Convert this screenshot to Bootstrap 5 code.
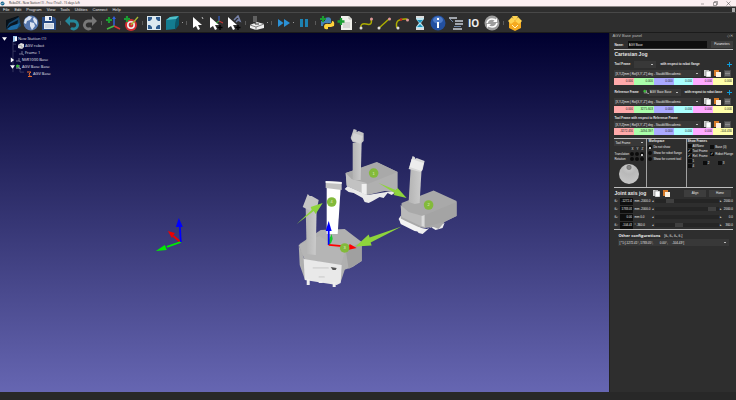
<!DOCTYPE html>
<html lang="en">
<head>
<meta charset="utf-8">
<meta name="viewport" content="width=device-width, initial-scale=1">
<title>RoboDK - New Station (1)</title>
<link href="https://cdn.jsdelivr.net/npm/bootstrap@5.3.0/dist/css/bootstrap.min.css" rel="stylesheet">
<style>
body{font:4px/6px "Liberation Sans",Arial,sans-serif;background:#2e2e2e;color:#e8e8e8}
button,input,select{font:inherit;color:inherit;border:0;padding:0;margin:0;border-radius:0;min-width:0}
button{background:none;line-height:1}
.titlebar{height:7px;background:#fbeff1;color:#222;font:3px/6px "Open Sans",sans-serif;border-bottom:1px solid #8e8888}
.titlebar svg{width:5px;height:5px;display:block}
.titlebar .win{gap:8px;margin-right:5px}
.menubar{height:6px;border-bottom:1px solid #484848;gap:5px;padding-left:3px}
.menubar button{line-height:5px}
.toolbar-main{height:20px;border-bottom:1px solid #1b1b1b;padding-left:4px}
.tool{width:18px;height:18px;flex:none;display:flex;align-items:center;justify-content:center}
.tool svg{width:16px;height:16px}
.sep{width:5px;flex:none;display:flex;justify-content:center}
.sep::before{content:"";width:1px;height:4px;background:#5a5a5a}
.more{width:3px;flex:none;display:flex;justify-content:center}
.more::before{content:"";width:1px;height:1px;background:#999}
.view3d{background:linear-gradient(#00002f,#6666b2);min-width:0}
.view3d>svg{width:100%;height:100%;display:block}
.tree{position:absolute;left:2px;top:2px;font:4px/7px "Open Sans",sans-serif;color:#e6e6f0}
.tree svg{width:7px;height:6px;flex:none}
.tree .tw{width:5px}
.tree li{height:7px}
.dock{width:17.2%;padding:0 3px 0 4px;font-size:3px;line-height:4px;border-left:1px solid #222}
.dock>*{flex:none}
.dock-title{height:8px;line-height:5px;color:#bbb;font-size:4px;margin-left:-2px}
.rule{height:1px;background:#bdbdbd}
.h5px{font:bold 5px/8px "Liberation Sans",sans-serif;margin:0}
.h4px{font:bold 4px/6px "Open Sans",sans-serif;margin:0}
.b{font-weight:bold}
.t1{margin-top:1px}.t2{margin-top:2px}.t3{margin-top:3px}
.line8{height:8px}
.field{background:#0e0e0e;height:7px;padding:0 1px}
.pbtn{background:#3d3d3d;height:7px;text-align:center;width:22px;flex:none}
.sel{appearance:none;height:7px;background:#383838 linear-gradient(#bbb,#bbb) no-repeat right 3px center/2px 1px;padding:0 1px;line-height:6px}
.w-tf{width:22px}.w-rf{width:32px}
.posebar{gap:3px;padding-right:2px}
.tiny{width:7px;height:7px;flex:none}
.tiny svg{width:7px;height:7px;display:block}
.cells input{width:0;flex:1 1 0;height:7px;text-align:right;color:#222;line-height:7px;padding-right:1px}
.cells input:nth-child(1){background:#ffaaaa}.cells input:nth-child(2){background:#aaffaa}
.cells input:nth-child(3){background:#aaaaff}.cells input:nth-child(4){background:#aaffff}
.cells input:nth-child(5){background:#ffaaff}.cells input:nth-child(6){background:#ffffaa}
.opts{height:48px}
.opts>*{min-width:0}
.opts .o1{width:27%}.opts .o2{width:33%}.opts .o3{width:40%}
.opts>*+*{border-left:1px solid #a2a2a2;padding-left:1px}
.axes{display:grid;grid-template-columns:1fr 4px 4px 4px;gap:1px;padding:1px 2px 0 0;line-height:4px;text-align:center}
.axes span:first-child,.axes .nm{text-align:left}
.tick{appearance:none;width:4px;height:4px;background:#0c0c0c;flex:none;display:block;line-height:4px}
.tick[type=radio]{border-radius:50%}
.tick:checked::before{content:"✓";display:block;font:bold 4px/4px "DejaVu Sans",sans-serif;color:#fff}
.tick[type=radio]:checked::before{content:"";width:2px;height:2px;background:#fff;border-radius:50%;margin:1px;position:relative;top:1px}
.opt{display:flex;align-items:center;gap:1px;white-space:nowrap;height:5px}
.knob{width:20px;height:20px;border-radius:50%;background:radial-gradient(circle at 50% 17%,#888 0 1px,#777 2px,#c4c4c4 3px,#b9b9b9 7px,#cacaca);margin:3px auto 0 5px;display:block}
.jrow{height:8px;display:flex;align-items:center;gap:1px}
.jrow .field{width:13px;text-align:right}
.jrow label{width:5px}
.lo{width:17px;white-space:nowrap}.hi{width:10px;text-align:right}
.slide{appearance:none;flex:1;width:0;height:4px;background:#252525}
.slide::-webkit-slider-thumb{appearance:none;width:8px;height:4px;background:#404040}
.slide.full::-webkit-slider-thumb{width:2px;background:#252525}
.status{height:8px;background:#282828}
</style>
<script src="https://cdn.jsdelivr.net/npm/bootstrap@5.3.0/dist/js/bootstrap.bundle.min.js"></script>
</head>
<body class="d-flex flex-column vh-100 overflow-hidden">
<header>
<div class="titlebar d-flex align-items-center">
<svg class="mx-0 ms-0" viewBox="0 0 10 10"><circle cx="5" cy="5" r="4" fill="#17658e"/><path d="M2 6 9 3" stroke="#fff"/></svg>
<span class="ps-1">RoboDK - New Station (1) - Free (Trial) - 15 days left</span>
<div class="win ms-auto d-flex"><button aria-label="Minimize"><svg viewBox="0 0 10 10"><path d="M2 6h6" stroke="#555"/></svg></button><button aria-label="Restore"><svg viewBox="0 0 10 10"><path d="M1 3h6v6H1zM3 3V1h6v6H7" fill="none" stroke="#444"/></svg></button><button aria-label="Close"><svg viewBox="0 0 10 10"><path d="m1 1 8 8M9 1 1 9" stroke="#444"/></svg></button></div>
</div>
<nav class="menubar d-flex"><button>File</button><button>Edit</button><button>Program</button><button>View</button><button>Tools</button><button>Utilities</button><button>Connect</button><button>Help</button><button class="ms-auto me-0" aria-label="Restore view"><svg width="4" height="4" viewBox="0 0 4 4"><path d="M0 0h3v4H0z" fill="#aaa"/></svg></button></nav>
<div class="toolbar-main d-flex align-items-center">
<button class="tool" aria-label="Open"><svg viewBox="0 0 16 16"><path d="M1 5 13 1v10L5 14H1z" fill="#071018"/><path d="m4 5 10-4-1 9-8 4-4-2z" fill="#09131d"/><path d="m1 14 3-6 10-6 2 9-4 3-7 1z" fill="#16486f"/><path d="m1 14 4-5 8-4-1 7-7 2z" fill="#0a1520"/><path d="m2 14 4-3 9-3-3 6-7 1z" fill="#1c6ba6"/></svg></button>
<button class="tool" aria-label="Online library"><svg viewBox="0 0 16 16"><circle cx="8" cy="8" r="7.500" fill="#5576ac"/><path d="m2 4 4-3 3 1-2 3-3 1-1 3-2-1zM7 7l4 1 1 3-3 4-2-4zM11 2l3 3v5l-3-3-1-3z" fill="#dbe3f1"/></svg></button>
<button class="tool" aria-label="Save"><svg viewBox="0 0 16 16"><path d="M1 2h12l2 2v11H1z" fill="#294b83"/><path d="M4 1h7v5H4zM3 8h10v6H3z" fill="#e8edf2"/><path d="M8 2h2v3H8z" fill="#294b83"/><path d="M4 10h8M4 12h8" stroke="#91a1b8" stroke-width=".6"/></svg></button>
<span class="sep"></span>
<button class="tool" aria-label="Undo"><svg viewBox="0 0 16 16"><path d="M4 6h6a4 4 0 1 1-3 7" fill="none" stroke="#25879a" stroke-width="2.800"/><path d="M1 6 6 1v10z" fill="#25879a"/></svg></button>
<button class="tool" aria-label="Redo"><svg viewBox="0 0 16 16"><path d="M12 6H6a4 4 0 1 0 3 7" fill="none" stroke="#777" stroke-width="2.800"/><path d="m15 6-5-5v10z" fill="#777"/></svg></button>
<span class="sep"></span>
<button class="tool" aria-label="Add reference frame"><svg viewBox="0 0 16 16"><path d="M9 11V3" stroke="#3260db" stroke-width="1.500"/><path d="m9 1-2 3h4z" fill="#3260db"/><path d="m9 11 6 3" stroke="#d33" stroke-width="1.600"/><path d="m9 11-7 3" stroke="#4b4" stroke-width="1.500"/><path d="M4 2v6M1 5h6" stroke="#1b9d32" stroke-width="2.200"/></svg></button>
<button class="tool" aria-label="Add target"><svg viewBox="0 0 16 16"><circle cx="8" cy="10" r="6" fill="#d42d31"/><circle cx="8" cy="10" r="4" fill="#eee"/><circle cx="8" cy="10" r="2.400" fill="#d42d31"/><path d="m8 10 7-8" stroke="#a8b936" stroke-width="1.400"/><path d="M4 1v6M1 4h6" stroke="#1b9d32" stroke-width="2.200"/></svg></button>
<span class="sep"></span>
<button class="tool" aria-label="Fit all"><svg viewBox="0 0 16 16"><path d="M1 1h14v14H1z" fill="#dce8ef"/><path d="M2 2h4v2L4 6H2zM14 2v4h-2l-2-2V2zM2 14v-4h2l2 2v2zM14 14h-4v-2l2-2h2z" fill="#2d5a8c"/></svg></button>
<button class="tool" aria-label="Isometric view"><svg viewBox="0 0 16 16"><path d="m2 5 4-3 9-1-3 4-1 9-9 1z" fill="#137c91"/><path d="m2 5 10-1 3-3-9 1z" fill="#4fc0ca"/><path d="m12 5 3-4v9l-4 5z" fill="#08596e"/></svg></button>
<span class="more"></span><span class="sep"></span>
<button class="tool" aria-label="Select"><svg viewBox="0 0 16 16"><path d="M3 2v11l3-2 2 4 2-1-2-4h4z" fill="#fff"/><path d="m12 2 1 2" stroke="#bbb"/></svg></button>
<button class="tool" aria-label="Move frame"><svg viewBox="0 0 16 16"><path d="M2 2v11l3-2 2 4 2-1-2-4h4z" fill="#fff"/><path d="M11 6V1" stroke="#36d"/><path d="m11 6 4 2" stroke="#d33"/><path d="m11 6-3 2" stroke="#4b4"/><path d="M12 10v5m-2.500-2.500h5" stroke="#000" stroke-width="1.400"/></svg></button>
<button class="tool" aria-label="Move tool"><svg viewBox="0 0 16 16"><path d="M2 2v11l3-2 2 4 2-1-2-4h4z" fill="#fff"/><path d="m8 5 4-4 2 5-2-1-2 2" fill="none" stroke="#7782a8" stroke-width="1.500"/><path d="M12 10v5m-2.500-2.500h5" stroke="#000" stroke-width="1.400"/></svg></button>
<span class="sep"></span>
<button class="tool" aria-label="Check collisions"><svg viewBox="0 0 16 16"><path d="m1 10 7-3 7 2v4l-8 2-6-2z" fill="#eee"/><path d="m1 10 6 2 8-3M7 12v3" fill="none" stroke="#555" stroke-width=".7"/><path d="M4 1h4v6H4z" fill="#606060"/><path d="M6 7v2h4" fill="none" stroke="#333"/></svg></button>
<span class="more"></span><span class="sep"></span>
<button class="tool" aria-label="Fast simulation"><svg viewBox="0 0 16 16"><path d="m3 4 5.500 4L3 12zm6 0 6 4-6 4z" fill="#2b91d6"/></svg></button>
<span class="more"></span>
<button class="tool" aria-label="Pause"><svg viewBox="0 0 16 16"><path d="M4 4h3v8H4zm5 0h3v8H9z" fill="#1d82b2"/></svg></button>
<span class="sep"></span>
<button class="tool" aria-label="Add Python program"><svg viewBox="0 0 16 16"><path d="M6 3q5-2 6 1v4H7q-3 0-3 3H2V6h4z" fill="#4583b6"/><path d="M13 6q3 0 2 5l-3 1H9v2q-4 1-4-2 0-4 5-3 3 0 3-3z" fill="#ffd43b"/><path d="M4 1v6M1 4h6" stroke="#1b9d32" stroke-width="2.200"/></svg></button>
<button class="tool" aria-label="Add program"><svg viewBox="0 0 16 16"><path d="M4 1h8l3 3v11H4z" fill="#f1f1ec"/><path d="M12 1v3h3M6 8h7M6 10h7M6 12h7" fill="none" stroke="#aaa" stroke-width=".7"/><path d="M4 3v7M.5 6.500h7" stroke="#1b9d32" stroke-width="2.300"/></svg></button>
<span class="more"></span>
<button class="tool" aria-label="Joint move"><svg viewBox="0 0 16 16"><path d="M3 13q-1-5 5-4 7 2 5-5" fill="none" stroke="#acad00" stroke-width="1.500"/><circle cx="3" cy="13" r="1.500" fill="#ddd"/><circle cx="13.500" cy="4" r="1.500" fill="#d99"/></svg></button>
<button class="tool" aria-label="Linear move"><svg viewBox="0 0 16 16"><path d="m3 13 10-9" stroke="#acad00" stroke-width="1.500"/><circle cx="3" cy="13" r="1.500" fill="#ddd"/><circle cx="13.500" cy="4" r="1.500" fill="#d99"/></svg></button>
<button class="tool" aria-label="Circular move"><svg viewBox="0 0 16 16"><path d="M3 13Q0 3 13 4" fill="none" stroke="#acad00" stroke-width="1.500"/><circle cx="4" cy="13" r="1.500" fill="#ddd"/><circle cx="7" cy="4.500" r="1.300" fill="#c22"/><circle cx="13.500" cy="5" r="1.500" fill="#d99"/></svg></button>
<button class="tool" aria-label="Pause instruction"><svg viewBox="0 0 16 16"><path d="M4 2h8v2L9 8l3 4v2H4v-2l3-4-3-4z" fill="#bce6f2"/><path d="M4 2h8M4 14h8" stroke="#ddd" stroke-width="2"/><path d="m5 5 3 3 3-3zm0 7 3-3 3 3z" fill="#1995bf"/></svg></button>
<button class="tool" aria-label="Show message"><svg viewBox="0 0 16 16"><circle cx="8" cy="8" r="7.500" fill="#2350a0"/><ellipse cx="8" cy="5" rx="5" ry="3.500" fill="#4d7bc8"/><path d="M7 7h2v6H7zM7 3h2v2H7z" fill="#fff"/></svg></button>
<button class="tool" aria-label="Program call"><svg viewBox="0 0 16 16"><path d="M1 3h8M7 6h8M7 9h8M5 14h9" stroke="#c8ced8" stroke-width="1.300"/><path d="M6 11.500h7M2 4l3 3" stroke="#7188a8"/></svg></button>
<button class="tool" aria-label="Set IO"><svg viewBox="0 0 16 16"><text x="2" y="12" font-family="Open Sans" font-weight="bold" font-size="10" fill="#eee">IO</text></svg></button>
<button class="tool" aria-label="Simulation event"><svg viewBox="0 0 16 16"><circle cx="8" cy="8" r="7.500" fill="#9d9d9d"/><path d="M3 8q1-4 5-4 3 0 4 2M13 8q-1 4-5 4-3 0-4-2" fill="none" stroke="#fff" stroke-width="1.600"/><path d="m13 3v4H9zM3 13V9h4z" fill="#fff"/></svg></button>
<span class="sep"></span>
<button class="tool" aria-label="Export"><svg viewBox="0 0 16 16"><path d="m2 7 6-2 6 2v6l-6 3-6-3z" fill="#f5aa20"/><path d="m1 6 4-4 3 4-4 3zm14 0-4-4-3 4 4 3zM5 1h6l-2 4H7z" fill="#ffd351"/><path d="m5 10 3 3 3-3" fill="none" stroke="#fff1ba"/></svg></button>
</div>
</header>
<main class="d-flex flex-grow-1 overflow-hidden">
<section class="view3d flex-grow-1 position-relative">
<ul class="tree list-unstyled m-0">
<li class="d-flex align-items-center"><svg class="tw" viewBox="0 0 6 6"><path d="M0 1h6L3 5z" fill="#fff"/></svg><svg class="ms-1" viewBox="0 0 7 6"><path d="M2 0h4v5l-4 1z" fill="#9cc7ec"/><path d="M4 1h2v4H4z" fill="#fff"/></svg>New Station (1)</li>
<li class="d-flex align-items-center ms-3"><svg viewBox="0 0 7 6"><path d="m0 2 3-2 3 1v3L4 6 0 5z" fill="#ddd"/><path d="m0 2 4 1v3" fill="none" stroke="#888" stroke-width=".6"/></svg>AGV robot</li>
<li class="d-flex align-items-center ms-3"><svg viewBox="0 0 7 6"><path d="M4 1v3H1m3 0 2 1" fill="none" stroke="#999ab0" stroke-width=".7"/></svg>Frame 1</li>
<li class="d-flex align-items-center"><svg class="tw ms-2" viewBox="0 0 6 6"><path d="M1 0v6l4-3z" fill="#fff"/></svg><svg class="ms-0" viewBox="-1 0 7 6"><path d="M3 1v3H0m3 0 2 1" fill="none" stroke="#999ab0" stroke-width=".7"/></svg><span class="ps-0 t-pad">MiR1000 Base</span></li>
<li class="d-flex align-items-center"><svg class="tw ms-2" viewBox="0 0 6 6"><path d="M0 1h6L3 5z" fill="#fff"/></svg><svg viewBox="-1 0 7 6"><path d="M3 1v3H0m3 0 2 1" fill="none" stroke="#ddd" stroke-width=".7"/><circle cx="1.500" cy="2" r="1.500" fill="#39b838"/></svg>AGV Base Base</li>
<li class="d-flex align-items-center ms-4"><svg viewBox="0 0 7 6"><path d="M1 1h4L3 3l1 2M2 5.500h4" fill="none" stroke="#e46b2e"/></svg>AGV Base</li>
</ul>
<svg viewBox="0 33 610 359" role="img" aria-label="Station view with AGV route">
<defs>
<linearGradient id="mast"><stop offset="0" stop-color="#b4b4b4"/><stop offset="1" stop-color="#cccccc"/></linearGradient>
</defs>
<path d="M13 41v31M13 44h3M13 51h3M20 68v4h4" fill="none" stroke="#49496e" stroke-width=".7"/>
<path d="m345 189 3-3 20 9 25-4 2 2-3 2-4-2-4 5-4-1-7 4-4 2-4-1-2-4-9-5-5-1z" fill="#eaeaea"/><path d="M346 173 378 162.500 398 172v17l-4 3-9-1-17 4-6-3-15-7z" fill="#b0b0b0"/><path d="M346 173 377 162 398 172 368 184 352 181z" fill="#a9a9a9"/><path d="m346 173 6 6 15 4v12l-20-9z" fill="#c2c2c2"/><path d="M362 184h5v11l-5-2z" fill="#efefef"/><path d="m353 143 9-1-1 38h-8z" fill="url(#mast)"/><path d="m354 129 3 1v2l2-1 5 2v8l-3 3-8-2-2-4z" fill="#c4c4c4"/><path d="m354 133 9 3-2 8-9-4z" fill="#d4d4d4"/>
<path d="m401 216 21 12 5 1 18-6-2 5-7 2-5-3-8 7-4-1-2-3-16-7-2-4z" fill="#efefef"/>
<path d="M402 203 434 190.500 457 201v15l-12 6-6 7-5-2-9 1-9-1-15-7z" fill="#a9a9a9"/><path d="m401 205 8 7 14 4v11l-21-10z" fill="#bababa"/><path d="m423 216 34-14v14l-13 6-19 5z" fill="#a4a4a4"/><path d="m422 216 3-1v12l-3-1z" fill="#dadada"/><path d="m400 218 6 3 15 7v4l-6-1-14-7z" fill="#f3f3f3"/><path d="M411 169h11l-2 34-5 1-6-2z" fill="url(#mast)"/><path d="m413 156 2 1 1 2 1-1 8 3-2 9-2 2-12-3z" fill="#d9d9d9"/><path d="m412 159 12 4-2 8-12-4z" fill="#ededed"/>
<path d="m300 244 21-14 24-1 17 13v19l-9 6-9 3-43-15z" fill="#b0b0b0"/><path d="m346 250 16-8v19l-13 8z" fill="#a0a0a0"/>
<path d="m327 187 14 1-3 46h-11z" fill="#fff"/><path d="m326 181 16 1v8l-16-2z" fill="#c1c1c1"/><path d="m326 181 16 1v2l-16-1z" fill="#f6f6f6"/>
<path d="m299 245 21-9 25 17-3 12-37-5z" fill="#b5b5b5"/><path d="m299 245 6 15 36 5 5-14v16l-5 15-36-3-5-14z" fill="#b0b0b0"/><path d="m304 259 38 6-1 18-4 2-32-5z" fill="#e9e9e9"/><path d="M307 279h3v6h-3zM333 282h3v5h-3zM319 281h4v2h-4z" fill="#eee"/><path d="M313 268h16M319 277h6" stroke="#bcbcbc" stroke-width=".7"/><path d="m331 267 6 1-1 2h-3z" fill="#555"/>
<path d="m306 208 11-2-1 49-9-1z" fill="url(#mast)"/><path d="m308 194 2 2h2l7 4-2 10-4 2-10-5z" fill="#c5c5c5"/>
<g fill="#8ed43c"><path d="m297 224 15-14-1-3 12-4-7 11-2-3zM379 183l17 7 2-2 9 10-13-3 1-2zM402 226.500l-31 16 1 3-16 1 13-12 1 3z"/></g>
<path d="m329 245 2-8" stroke="#0e2" stroke-width="1.500"/><path d="m332 234 1 5-2 5-2-3z" fill="#18c92c"/><path d="M329 245v-15" stroke="#00f" stroke-width="1.800"/><path d="m329 221-3 10h6z" fill="#00f"/><path d="m329 245 22 2" stroke="#f00" stroke-width="1.800"/><path d="m350 244 7 4-9 2z" fill="#f00"/>
<path d="m180.500 242-7-6" stroke="#e00" stroke-width="2"/><path d="m168 231 7 2-3 5z" fill="#e00"/><path d="m181 242-14 5" stroke="#0e0" stroke-width="1.800"/><path d="m156 251 9-6 2 5z" fill="#0e0"/><path d="m181 242-1-16" stroke="#00f" stroke-width="1.800"/><path d="m179 218-3 9h7z" fill="#00f"/>
<g fill="#83ba3b"><circle cx="374" cy="173" r="4.800"/><circle cx="429" cy="205" r="4.800"/><circle cx="345" cy="248" r="4.800"/><circle cx="332" cy="202" r="4.800"/></g>
<g fill="#e3f0c9" font-family="Liberation Sans" font-size="4" text-anchor="middle"><text x="374" y="174.500">1</text><text x="429" y="206.500">2</text><text x="345" y="249.500">3</text><text x="332" y="203.500">4</text></g>
</svg>
</section>
<aside class="dock flex-shrink-0 d-flex flex-column">
<svg width="0" height="0" class="position-absolute"><defs>
<g id="copy"><path d="M0 0h5v6H0z" fill="#ccc"/><path d="M2 1h5v6H2z" fill="#fff" stroke="#666" stroke-width=".5"/></g>
<g id="paste"><path d="M0 0h5v6H0z" fill="#d77b28"/><path d="M2 2h5v5H2z" fill="#fbf0e0"/></g>
<g id="rows"><path d="M0 0h7v7H0z" fill="#4a4a4a"/><path d="M1 2h5M1 3.500h5M1 5h5" stroke="#aaa" stroke-width=".7"/></g>
<g id="plus"><path d="M3.500 1v5M1 3.500h5" stroke="#0c9ddd"/></g></defs></svg>
<div class="dock-title d-flex justify-content-between"><span>AGV Base panel</span><span>◇✕</span></div>
<div class="d-flex align-items-center"><label class="b" for="nm">Name:</label><input id="nm" class="field flex-grow-1 ms-1 me-1" value="AGV Base"><button class="pbtn">Parameters</button></div>
<div class="rule t1"></div>
<h2 class="h5px">Cartesian Jog</h2>
<div class="line8 t2 d-flex align-items-center"><label class="b" for="tf">Tool Frame</label><select id="tf" class="sel w-tf mx-1"><option>&nbsp;</option></select><span class="b">with respect to robot flange</span><button class="tiny ms-auto" aria-label="Add tool"><svg viewBox="0 0 7 7"><use href="#plus"/></svg></button></div>
<div class="d-flex posebar t2"><select class="sel flex-grow-1" aria-label="Tool pose format"><option>[X,Y,Z]mm | Rot[X,Y',Z''] deg - Staubli/Mecademic</option></select><button class="tiny" aria-label="Copy"><svg viewBox="0 0 7 7"><use href="#copy"/></svg></button><button class="tiny" aria-label="Paste"><svg viewBox="0 0 7 7"><use href="#paste"/></svg></button><button class="tiny" aria-label="More"><svg viewBox="0 0 7 7"><use href="#rows"/></svg></button></div>
<div class="cells d-flex t1"><input aria-label="X" value="0.000"><input aria-label="Y" value="0.000"><input aria-label="Z" value="0.000"><input aria-label="U" value="0.000"><input aria-label="V" value="0.000"><input aria-label="W" value="0.000"></div>
<div class="line8 t3 d-flex align-items-center"><label class="b" for="rf">Reference Frame</label><svg class="ms-1" width="6" height="6" viewBox="0 0 7 6"><path d="M4 1v3H1m3 0 3 1" fill="none" stroke="#ddd" stroke-width=".7"/><circle cx="2" cy="2" r="1.500" fill="#39b838"/></svg><select id="rf" class="sel w-rf me-1"><option>AGV Base Base</option></select><span class="b">with respect to robot base</span><button class="tiny ms-auto" aria-label="Add frame"><svg viewBox="0 0 7 7"><use href="#plus"/></svg></button></div>
<div class="d-flex posebar t2"><select class="sel flex-grow-1" aria-label="Reference pose format"><option>[X,Y,Z]mm | Rot[X,Y',Z''] deg - Staubli/Mecademic</option></select><button class="tiny" aria-label="Copy"><svg viewBox="0 0 7 7"><use href="#copy"/></svg></button><button class="tiny" aria-label="Paste"><svg viewBox="0 0 7 7"><use href="#paste"/></svg></button><button class="tiny" aria-label="More"><svg viewBox="0 0 7 7"><use href="#rows"/></svg></button></div>
<div class="cells d-flex t1"><input aria-label="X" value="0.000"><input aria-label="Y" value="3275.603"><input aria-label="Z" value="0.000"><input aria-label="U" value="0.000"><input aria-label="V" value="0.000"><input aria-label="W" value="0.000"></div>
<div class="b t3">Tool Frame with respect to Reference Frame</div>
<div class="d-flex posebar t1"><select class="sel flex-grow-1" aria-label="Position format"><option>[X,Y,Z]mm | Rot[X,Y',Z''] deg - Staubli/Mecademic</option></select><button class="tiny" aria-label="Copy"><svg viewBox="0 0 7 7"><use href="#copy"/></svg></button><button class="tiny" aria-label="Paste"><svg viewBox="0 0 7 7"><use href="#paste"/></svg></button><button class="tiny" aria-label="More"><svg viewBox="0 0 7 7"><use href="#rows"/></svg></button></div>
<div class="cells d-flex"><input aria-label="X" value="-3272.430"><input aria-label="Y" value="-1494.397"><input aria-label="Z" value="0.000"><input aria-label="U" value="0.000"><input aria-label="V" value="0.000"><input aria-label="W" value="-104.430"></div>
<div class="rule t3"></div>
<div class="opts d-flex">
<div class="o1"><select class="sel w-100" aria-label="Jog frame"><option>Tool Frame</option></select>
<div class="axes"><span></span><span>X</span><span>Y</span><span>Z</span>
<span class="nm">Translation</span><input class="tick" type="radio" name="ax" aria-label="Translate X"><input class="tick" type="radio" name="ax" aria-label="Translate Y"><input class="tick" type="radio" name="ax" aria-label="Translate Z" checked>
<span class="nm">Rotation</span><input class="tick" type="radio" name="ax" aria-label="Rotate X"><input class="tick" type="radio" name="ax" aria-label="Rotate Y"><input class="tick" type="radio" name="ax" aria-label="Rotate Z"></div>
<button class="knob" aria-label="Jog dial"></button></div>
<div class="o2"><div class="b">Workspace</div>
<label class="opt t1"><input class="tick" type="radio" name="ws" checked>Do not show</label>
<label class="opt t1"><input class="tick" type="radio" name="ws">Show for robot flange</label>
<label class="opt t1"><input class="tick" type="radio" name="ws">Show for current tool</label></div>
<div class="o3"><div class="b">Show Frames</div>
<div class="row g-0"><div class="col-6"><label class="opt"><input class="tick" type="checkbox">All/None</label><label class="opt"><input class="tick" type="checkbox" checked>Tool Frame</label><label class="opt"><input class="tick" type="checkbox" checked>Ref. Frame</label></div>
<div class="col-6"><label class="opt t1"><input class="tick" type="checkbox">Base (0)</label><label class="opt t2"><input class="tick" type="checkbox" checked>Robot Flange</label></div></div>
<div class="row g-0 align-items-center"><div class="col-4"><label class="opt"><input class="tick" type="checkbox">1</label><label class="opt"><input class="tick" type="checkbox">4</label></div><div class="col-4"><label class="opt"><input class="tick" type="checkbox">2</label></div><div class="col-4"><label class="opt"><input class="tick" type="checkbox">3</label></div></div></div>
</div>
<div class="rule"></div>
<div class="line8 t1 d-flex align-items-center posebar"><h2 class="h5px me-1">Joint axis jog</h2><button class="tiny" aria-label="Copy joints"><svg viewBox="0 0 7 7"><use href="#copy"/></svg></button><button class="tiny" aria-label="Paste joints"><svg viewBox="0 0 7 7"><use href="#paste"/></svg></button><button class="pbtn ms-auto">Align</button><button class="pbtn">Home</button></div>
<div class="jrow"><label for="j1">θ₁:</label><input id="j1" class="field" value="-1272.41"><span class="lo">mm -2000.0</span>◂<input class="slide" type="range" aria-label="Joint 1" min="-2000" max="2000" value="-1272">▸<span class="hi">2000.0</span></div>
<div class="jrow"><label for="j2">θ₂:</label><input id="j2" class="field" value="1783.05"><span class="lo">mm -2000.0</span>◂<input class="slide" type="range" aria-label="Joint 2" min="-2000" max="2000" value="1783">▸<span class="hi">2000.0</span></div>
<div class="jrow"><label for="j3">θ₃:</label><input id="j3" class="field" value="0.00"><span class="lo">mm 0.0</span>◂<input class="slide full" type="range" aria-label="Joint 3" min="0" max="1" value="0">▸<span class="hi">0.0</span></div>
<div class="jrow"><label for="j4">θ₄:</label><input id="j4" class="field" value="-104.43"><span class="lo">° -360.0</span>◂<input class="slide" type="range" aria-label="Joint 4" min="-360" max="360" value="-104">▸<span class="hi">360.0</span></div>
<div class="rule"></div>
<div class="d-flex align-items-center t3 ps-1"><h2 class="h4px me-1">Other configurations</h2><span>[θ₁, θ₂, θ₃, θ₄]</span></div>
<div class="d-flex ps-1 pe-1"><select class="sel flex-grow-1" aria-label="Configuration"><option>[ *1:[-1272.41°, 1783.05°, &nbsp; &nbsp; &nbsp; &nbsp;0.00°, &nbsp; &nbsp; -104.43°]</option></select></div>
</aside>
</main>
<footer class="status flex-shrink-0"></footer>
</body>
</html>
